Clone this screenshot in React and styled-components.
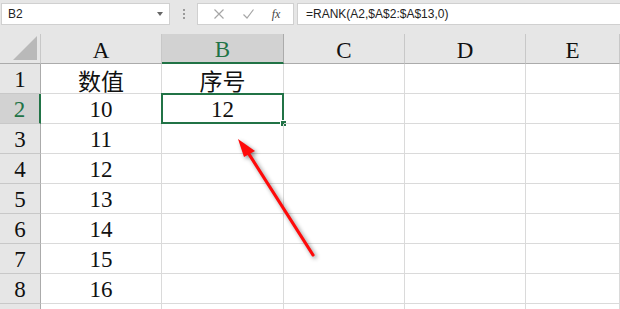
import React from "react";
import styled, { createGlobalStyle } from "styled-components";

const Global = createGlobalStyle`
  html, body { margin: 0; padding: 0; background: #fff; }
  body { width: 620px; height: 309px; overflow: hidden; }
  * { box-sizing: border-box; }
`;

const Page = styled.div`
  position: relative;
  width: 620px;
  height: 309px;
  overflow: hidden;
  background: #fff;
  font-family: "Liberation Serif", "Noto Sans CJK SC", serif;
`;

const Toolbar = styled.div`
  height: 34px;
  background: #e6e6e6;
  display: flex;
  align-items: flex-start;
  padding-top: 3px;
  padding-left: 1px;
  font-family: "Liberation Sans", "Noto Sans", sans-serif;
`;

const NameBox = styled.div`
  width: 169px;
  height: 22px;
  background: #fff;
  border: 1px solid #d0d0d0;
  display: flex;
  align-items: center;
  justify-content: space-between;
  padding: 0 6px 0 6px;
  font-size: 12px;
  color: #222;
`;

const DropArrow = styled.span`
  width: 0;
  height: 0;
  border-left: 3.5px solid transparent;
  border-right: 3.5px solid transparent;
  border-top: 4px solid #666;
`;

const Grip = styled.div`
  width: 27px;
  height: 22px;
  display: flex;
  flex-direction: column;
  align-items: center;
  justify-content: center;
  gap: 2px;
  span {
    width: 2px;
    height: 2px;
    background: #9a9a9a;
  }
`;

const FxBox = styled.div`
  width: 97px;
  height: 22px;
  background: #fff;
  border: 1px solid #d0d0d0;
  display: flex;
  align-items: center;
  justify-content: space-around;
  padding: 0 4px 0 6px;
`;

const FxText = styled.span`
  font-family: "Liberation Serif", serif;
  font-style: italic;
  font-size: 12px;
  color: #444;
`;

const FormulaInput = styled.div`
  flex: 1;
  height: 22px;
  margin-left: 3px;
  background: #fff;
  border: 1px solid #d0d0d0;
  border-right: none;
  display: flex;
  align-items: center;
  padding-left: 8px;
  font-size: 12px;
  color: #222;
`;

const Grid = styled.div`
  display: grid;
  grid-template-columns: 41px 121px 122px 121px 121px 1fr;
  grid-template-rows: repeat(10, 30px);
`;

const Corner = styled.div`
  background: #e6e6e6;
  border-right: 1px solid #c8c8c8;
  border-bottom: 1px solid #ababab;
  display: flex;
  align-items: flex-end;
  justify-content: flex-end;
  padding: 0 3px 3px 0;
`;

const Triangle = styled.div`
  width: 0;
  height: 0;
  border-left: 24px solid transparent;
  border-bottom: 24px solid #b9b9b9;
`;

const ColHead = styled.div`
  background: ${(p) => (p.$active ? "#d2d2d2" : "#e6e6e6")};
  border-right: 1px solid ${(p) => (p.$active ? "#ababab" : "#c8c8c8")};
  border-bottom: ${(p) => (p.$active ? "2px solid #217346" : "1px solid #ababab")};
  color: ${(p) => (p.$active ? "#217346" : "#111")};
  font-size: 23px;
  display: flex;
  align-items: center;
  justify-content: center;
  padding-top: 4px;
`;

const RowHead = styled.div`
  background: ${(p) => (p.$active ? "#d2d2d2" : "#e6e6e6")};
  border-right: ${(p) => (p.$active ? "2px solid #217346" : "1px solid #ababab")};
  border-bottom: 1px solid #c8c8c8;
  color: ${(p) => (p.$active ? "#217346" : "#111")};
  font-size: 23px;
  display: flex;
  align-items: center;
  justify-content: center;
  padding-top: 3px;
`;

const Cell = styled.div`
  position: relative;
  border-right: 1px solid #dadada;
  border-bottom: 1px solid #dadada;
  font-size: 23px;
  color: #111;
  display: flex;
  align-items: center;
  justify-content: center;
  padding-top: 3px;
`;

const Selection = styled.div`
  position: absolute;
  left: -1px;
  top: -1px;
  right: -1px;
  bottom: -1px;
  border: 2px solid #217346;
  pointer-events: none;
`;

const Handle = styled.div`
  position: absolute;
  right: -5px;
  bottom: -5px;
  width: 7px;
  height: 7px;
  background: #217346;
  border: 1px solid #fff;
`;

const ArrowLayer = styled.svg`
  position: absolute;
  left: 0;
  top: 0;
  width: 620px;
  height: 309px;
  pointer-events: none;
  filter: drop-shadow(2px 2px 2px rgba(0, 0, 0, 0.45));
`;

const cols = ["A", "B", "C", "D", "E"];
const data = [
  ["数值", "序号"],
  ["10", "12"],
  ["11", ""],
  ["12", ""],
  ["13", ""],
  ["14", ""],
  ["15", ""],
  ["16", ""],
  ["", ""],
];

export default function App() {
  return (
    <Page>
      <Global />
      <Toolbar>
        <NameBox>
          <span>B2</span>
          <DropArrow />
        </NameBox>
        <Grip>
          <span />
          <span />
          <span />
        </Grip>
        <FxBox>
          <svg width="12" height="12" viewBox="0 0 12 12">
            <path d="M1.5 1.5 L10.5 10.5 M10.5 1.5 L1.5 10.5" stroke="#a6a6a6" strokeWidth="1.2" fill="none" />
          </svg>
          <svg width="13" height="12" viewBox="0 0 13 12">
            <path d="M1.5 6.5 L5 10 L11.5 1.5" stroke="#a6a6a6" strokeWidth="1.2" fill="none" />
          </svg>
          <FxText>fx</FxText>
        </FxBox>
        <FormulaInput>=RANK(A2,$A$2:$A$13,0)</FormulaInput>
      </Toolbar>
      <Grid>
        <Corner>
          <Triangle />
        </Corner>
        {cols.map((c) => (
          <ColHead key={c} $active={c === "B"}>
            {c}
          </ColHead>
        ))}
        {data.map((row, r) => (
          <React.Fragment key={r}>
            <RowHead $active={r === 1}>{r < 8 ? r + 1 : ""}</RowHead>
            {cols.map((c, ci) => (
              <Cell key={c}>
                {row[ci] || ""}
                {r === 1 && ci === 1 && (
                  <Selection>
                    <Handle />
                  </Selection>
                )}
              </Cell>
            ))}
          </React.Fragment>
        ))}
      </Grid>
      <ArrowLayer viewBox="0 0 620 309">
        <line x1="313" y1="255" x2="247" y2="151" stroke="#ff0a0a" strokeWidth="3.2" strokeLinecap="round" />
        <polygon points="238,139 255,151 244,157" fill="#ff0a0a" />
      </ArrowLayer>
    </Page>
  );
}
